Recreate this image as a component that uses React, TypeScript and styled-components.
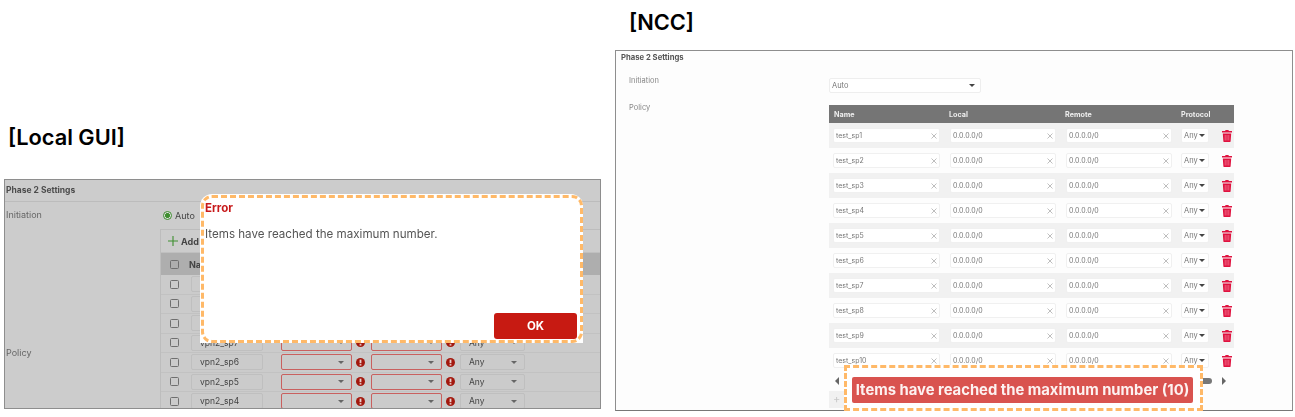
import React from "react";
import styled, { createGlobalStyle } from "styled-components";

const Global = createGlobalStyle`
  html, body { margin: 0; padding: 0; background: #fff; }
  body { font-family: Inter, "Liberation Sans", sans-serif; }
`;

const Page = styled.div`
  width: 1295px;
  height: 417px;
  overflow: hidden;
  display: flex;
  align-items: stretch;
`;

const LeftColumn = styled.div`
  width: 615px;
  padding: 0 0 8px 4px;
  box-sizing: border-box;
  display: flex;
  flex-direction: column;
  justify-content: flex-end;
`;

const RightColumn = styled.div`
  width: 678px;
  padding-top: 10px;
  box-sizing: border-box;
  display: flex;
  flex-direction: column;
`;

const Title = styled.h2<{ $indent: number; $gap: number }>`
  margin: 0 0 ${(p) => p.$gap}px ${(p) => p.$indent}px;
  font: 600 21.8px/24px Inter, "Liberation Sans", sans-serif;
  color: #000;
`;

/* ---------- Local GUI ---------- */
const GuiPanel = styled.section`
  position: relative;
  width: 597px;
  height: 230px;
  box-sizing: border-box;
  border: 1px solid #8e8e8e;
  background: #cccccc;
  overflow: hidden;
  color: #555;
  filter: blur(0.35px);
`;

const GuiHeader = styled.div`
  height: 21px;
  padding-left: 1px;
  border-bottom: 1px solid #bcbcbc;
  font-size: 8.5px;
  font-weight: 700;
  line-height: 21px;
  color: #4c4c4c;
`;

const GuiLine = styled.div`
  display: flex;
  height: 27px;
  align-items: flex-start;
`;

const GuiLabel = styled.div`
  width: 155px;
  flex: none;
  padding-left: 1px;
  box-sizing: border-box;
  font-size: 9px;
  color: #666;
`;

const GuiInitLabel = styled(GuiLabel)`
  line-height: 26px;
`;

const Radio = styled.span`
  width: 9px;
  height: 9px;
  margin: 9px 3px 0 3px;
  box-sizing: border-box;
  border-radius: 50%;
  border: 1px solid #3f8f30;
  background: radial-gradient(circle, #3f8f30 0 2.2px, #ddd 2.6px);
`;

const RadioText = styled.span`
  font-size: 9px;
  line-height: 28px;
  color: #444;
`;

const GuiPolicy = styled.div`
  display: flex;
  align-items: center;
`;

const GuiTable = styled.div`
  flex: 1;
  min-height: 246px;
  align-self: flex-start;
  border-left: 1px solid #bdbdbd;
  border-top: 1px solid #bdbdbd;
  box-sizing: border-box;
`;

const AddBar = styled.div`
  height: 23px;
  display: flex;
  align-items: center;
  gap: 3px;
  padding-left: 7px;
  font-size: 9px;
  font-weight: 700;
  color: #444;
  border-bottom: 1px solid #c0c0c0;
  box-sizing: border-box;
`;

const GuiRow = styled.div<{ $head?: boolean }>`
  height: ${(p) => (p.$head ? 22 : 19.5)}px;
  display: flex;
  align-items: center;
  background: ${(p) => (p.$head ? "#aeaeae" : "#cbcbcb")};
  border-bottom: ${(p) => (p.$head ? "none" : "1px solid #c2c2c2")};
  box-sizing: border-box;
`;

const Check = styled.span`
  width: 7px;
  height: 7px;
  flex: none;
  margin-left: 9px;
  margin-right: 12px;
  border: 1px solid #6f6f6f;
  border-radius: 1.5px;
`;

const HeadText = styled.span`
  margin-left: -2px;
  font-size: 9px;
  font-weight: 700;
  color: #444;
`;

const GuiInput = styled.span`
  width: 72px;
  height: 16px;
  flex: none;
  padding-left: 8px;
  box-sizing: border-box;
  border: 1px solid #bfbfbf;
  border-radius: 2px;
  font-size: 8.5px;
  line-height: 14px;
  color: #444;
`;

const GuiSelect = styled.span<{ $bad?: boolean; $w: number }>`
  width: ${(p) => p.$w}px;
  height: 16px;
  flex: none;
  display: flex;
  align-items: center;
  justify-content: space-between;
  padding: 0 7px 0 8px;
  box-sizing: border-box;
  border: 1px solid ${(p) => (p.$bad ? "#c9605f" : "#bfbfbf")};
  border-radius: 2px;
  font-size: 8.5px;
  color: #444;
`;

const Caret = styled.i<{ $c?: string; $s?: number }>`
  width: 0;
  height: 0;
  display: inline-block;
  border-left: ${(p) => p.$s ?? 3}px solid transparent;
  border-right: ${(p) => p.$s ?? 3}px solid transparent;
  border-top: ${(p) => p.$s ?? 3}px solid ${(p) => p.$c ?? "#666"};
`;

const Alert = styled.svg`
  width: 9px;
  height: 9px;
  flex: none;
  margin: 0 5.5px 0 4px;
`;

const NameSpacer = styled.span`
  width: 18px;
  flex: none;
`;

/* ---------- Error dialog ---------- */
const Dialog = styled.div`
  position: absolute;
  left: 195px;
  top: 14px;
  width: 383px;
  height: 149px;
  background: #fff;
  border-radius: 12px 12px 0 0;
  box-sizing: border-box;
`;

const DashedOutline = styled.div`
  position: absolute;
  inset: 1px 0 0 1px;
  border: 3px dashed #ffb968;
  border-radius: 11px;
`;

const DialogTitle = styled.div`
  position: absolute;
  left: 5px;
  top: 7px;
  font-size: 11.5px;
  font-weight: 700;
  color: #c7191a;
`;

const DialogMessage = styled.div`
  position: absolute;
  left: 5px;
  top: 33px;
  font-size: 11.6px;
  color: #555;
`;

const OkButton = styled.button`
  position: absolute;
  left: 294px;
  top: 119px;
  width: 83px;
  height: 26px;
  padding: 0;
  border: none;
  border-radius: 3px;
  background: #c71a12;
  color: #fff;
  font: 700 11.5px Inter, sans-serif;
`;

/* ---------- NCC ---------- */
const NccPanel = styled.section`
  position: relative;
  width: 678px;
  height: 361px;
  box-sizing: border-box;
  border: 1px solid #8e8e8e;
  border-bottom-color: #777;
  background: #fdfdfd;
  color: #777;
  filter: blur(0.35px);
`;

const NccHeading = styled.div`
  padding: 1px 0 0 5px;
  font-size: 7.7px;
  line-height: 11px;
  font-weight: 700;
  color: #555;
`;

const NccLine = styled.div<{ $h?: number; $top?: number }>`
  display: flex;
  align-items: flex-start;
  height: ${(p) => (p.$h ? `${p.$h}px` : "auto")};
  margin-top: ${(p) => p.$top ?? 0}px;
`;

const NccLabel = styled.div`
  width: 213px;
  flex: none;
  margin-top: -2px;
  padding-left: 13px;
  box-sizing: border-box;
  font-size: 7.5px;
  line-height: 10px;
  color: #888;
`;

const InitSelect = styled.div`
  width: 152px;
  height: 15px;
  padding: 0 5px 0 2px;
  display: flex;
  align-items: center;
  justify-content: space-between;
  box-sizing: border-box;
  border: 1px solid #eee;
  border-radius: 2px;
  background: #fff;
  font-size: 7.5px;
  color: #777;
`;

const NccTableWrap = styled.div`
  width: 405px;
  flex: none;
`;

const NccHead = styled.div`
  height: 18px;
  display: grid;
  grid-template-columns: 115px 116px 116px 60px;
  padding-left: 5px;
  align-items: center;
  background: #757575;
  color: #eee;
  font-size: 7.2px;
  font-weight: 700;
`;

const NccRow = styled.div<{ $odd: boolean }>`
  height: 25px;
  display: grid;
  grid-template-columns: 107px 106px 106px 27px 18px;
  column-gap: 10px;
  padding-left: 4px;
  align-items: center;
  background: ${(p) => (p.$odd ? "#f1f1f1" : "#fdfdfd")};
`;

const NccInput = styled.div`
  height: 15px;
  padding: 0 2px 0 2px;
  display: flex;
  align-items: center;
  justify-content: space-between;
  box-sizing: border-box;
  border: 1px solid #f0f0f0;
  border-radius: 2px;
  background: #fff;
  font-size: 7px;
  color: #777;
`;

const ProtoSelect = styled(NccInput)`
  margin-left: -1px;
  padding: 0 3px 0 2px;
  font-size: 7.5px;
`;

const Clear = styled.svg`
  width: 6px;
  height: 6px;
  flex: none;
`;

const Trash = styled.svg`
  width: 10px;
  height: 12px;
  justify-self: end;
  margin-right: 5px;
`;

const ScrollRow = styled.div`
  height: 15px;
  display: flex;
  align-items: center;
  justify-content: space-between;
  padding: 0 8px 0 6px;
`;

const ArrowLeft = styled.i`
  border-top: 4px solid transparent;
  border-bottom: 4px solid transparent;
  border-right: 4px solid #666;
`;

const ScrollEnd = styled.div`
  display: flex;
  align-items: center;
  gap: 10px;
`;

const Thumb = styled.i`
  width: 14px;
  height: 6px;
  border-radius: 3px;
  background: #777;
`;

const ArrowRight = styled.i`
  border-top: 4px solid transparent;
  border-bottom: 4px solid transparent;
  border-left: 4px solid #666;
`;

const AddButton = styled.div`
  width: 32px;
  height: 17px;
  margin-top: 3px;
  padding-left: 4px;
  box-sizing: border-box;
  background: #f1f1f1;
  color: #c8c8c8;
  font-size: 11px;
  line-height: 17px;
`;

const ToastFrame = styled.div`
  position: absolute;
  left: 228px;
  top: 314px;
  width: 359px;
  height: 46px;
  padding: 9px 7px 0 5px;
  box-sizing: border-box;
  background: #fff;
  border: 3px dashed #ffb968;
`;

const Toast = styled.div`
  height: 26px;
  border-radius: 2px;
  background: #d9534f;
  color: #fdf2f1;
  text-align: center;
  font-size: 14.8px;
  font-weight: 700;
  line-height: 26px;
  white-space: nowrap;
`;

const AlertIcon = () => (
  <Alert viewBox="0 0 10 10">
    <circle cx="5" cy="5" r="5" fill="#a3180e" />
    <rect x="4" y="1.8" width="2" height="4" fill="#e8d0ce" />
    <rect x="4" y="6.8" width="2" height="1.6" fill="#e8d0ce" />
  </Alert>
);

const ClearIcon = () => (
  <Clear viewBox="0 0 6 6">
    <path d="M0.5 0.5 5.5 5.5M5.5 0.5 0.5 5.5" stroke="#adadad" strokeWidth="0.8" />
  </Clear>
);

const TrashIcon = () => (
  <Trash viewBox="0 0 10 12">
    <path
      fill="#e0123f"
      d="M3.6 0h2.8l.5 1H10v1.5H0V1h3.1zM.8 3.5h8.4l-.6 8a.6.6 0 0 1-.6.5H2a.6.6 0 0 1-.6-.5z"
    />
    <path stroke="#f5a0b0" strokeWidth="0.6" d="M3.2 5v5.5M5 5v5.5M6.8 5v5.5" />
  </Trash>
);

const guiNames = [10, 9, 8, 7, 6, 5, 4].map((n) => `vpn2_sp${n}`);
const nccNames = [1, 2, 3, 4, 5, 6, 7, 8, 9, 10].map((n) => `test_sp${n}`);

export default function App() {
  return (
    <Page>
      <Global />
      <LeftColumn>
        <Title $indent={4} $gap={30}>[Local GUI]</Title>
        <GuiPanel>
          <GuiHeader>Phase 2 Settings</GuiHeader>
          <GuiLine>
            <GuiInitLabel>Initiation</GuiInitLabel>
            <Radio />
            <RadioText>Auto</RadioText>
          </GuiLine>
          <GuiPolicy>
            <GuiLabel>Policy</GuiLabel>
            <GuiTable>
              <AddBar>
                <svg width="10" height="10" viewBox="0 0 10 10">
                  <path d="M5 0v10M0 5h10" stroke="#3f8f30" strokeWidth="1.1" />
                </svg>
                Add
              </AddBar>
              <GuiRow $head>
                <Check />
                <HeadText>Name</HeadText>
              </GuiRow>
              {guiNames.map((name) => (
                <GuiRow key={name}>
                  <Check />
                  <GuiInput>{name}</GuiInput>
                  <NameSpacer />
                  <GuiSelect $bad $w={71}>
                    <span />
                    <Caret />
                  </GuiSelect>
                  <AlertIcon />
                  <GuiSelect $bad $w={71}>
                    <span />
                    <Caret />
                  </GuiSelect>
                  <AlertIcon />
                  <GuiSelect $w={65}>
                    Any
                    <Caret />
                  </GuiSelect>
                </GuiRow>
              ))}
            </GuiTable>
          </GuiPolicy>
          <Dialog>
            <DashedOutline />
            <DialogTitle>Error</DialogTitle>
            <DialogMessage>Items have reached the maximum number.</DialogMessage>
            <OkButton>OK</OkButton>
          </Dialog>
        </GuiPanel>
      </LeftColumn>
      <RightColumn>
        <Title $indent={14} $gap={16}>[NCC]</Title>
        <NccPanel>
          <NccHeading>Phase 2 Settings</NccHeading>
          <NccLine $h={27} $top={15}>
            <NccLabel>Initiation</NccLabel>
            <InitSelect>
              Auto
              <Caret $c="#444" />
            </InitSelect>
          </NccLine>
          <NccLine>
            <NccLabel>Policy</NccLabel>
            <NccTableWrap>
              <NccHead>
                <span>Name</span>
                <span>Local</span>
                <span>Remote</span>
                <span>Protocol</span>
              </NccHead>
              {nccNames.map((name, i) => (
                <NccRow key={name} $odd={i % 2 === 0}>
                  <NccInput>
                    {name}
                    <ClearIcon />
                  </NccInput>
                  <NccInput>
                    0.0.0.0/0
                    <ClearIcon />
                  </NccInput>
                  <NccInput>
                    0.0.0.0/0
                    <ClearIcon />
                  </NccInput>
                  <ProtoSelect>
                    Any
                    <Caret $c="#444" />
                  </ProtoSelect>
                  <TrashIcon />
                </NccRow>
              ))}
              <ScrollRow>
                <ArrowLeft />
                <ScrollEnd>
                  <Thumb />
                  <ArrowRight />
                </ScrollEnd>
              </ScrollRow>
              <AddButton>+</AddButton>
            </NccTableWrap>
          </NccLine>
          <ToastFrame>
            <Toast>Items have reached the maximum number (10)</Toast>
          </ToastFrame>
        </NccPanel>
      </RightColumn>
    </Page>
  );
}
